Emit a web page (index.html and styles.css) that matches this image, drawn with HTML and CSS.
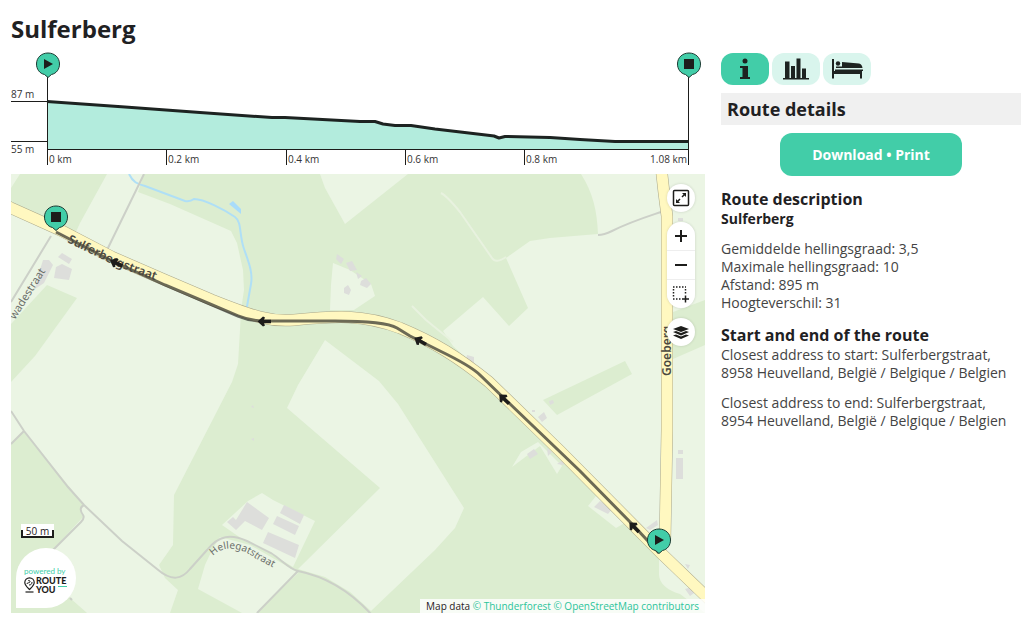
FILE: index.html
```html
<!DOCTYPE html>
<html lang="en">
<head>
<meta charset="utf-8">
<meta name="viewport" content="width=device-width, initial-scale=1">
<title>Sulferberg</title>
<link rel="stylesheet" href="styles.css">
</head>
<body>
<svg class="symbols" aria-hidden="true">
  <defs>
    <path id="pin" d="M0 13.500 L-3.500 10.500 C-8.500 9.500-11.500 5-11.500 0 C-11.500-6.500-6.500-11-0-11 C6.500-11 11.500-6.500 11.500 0 C11.500 5 8.500 9.500 3.500 10.500 Z"/>
    <path id="arrow" d="M-6.500 0 L-1-5 L1-4 L0-1.800 L7-1.800 L7 1.800 L0 1.800 L1 4 L-1 5 Z"/>
  </defs>
</svg>
<main class="page">
  <section class="route">
    <h1 class="title">Sulferberg</h1>
    <svg class="chart" viewBox="11 50 694 118" role="img" aria-label="Elevation profile">
      <path class="chart-fill" d="M48 101 125 107 200 113 272 117.500H285L360 121.500H375L383 124 395 125.500H411L435 129 490 135 498 137.500 505 136.500 550 137.500 615 141.500H688V149H48Z"/>
      <path class="chart-axis" d="M11 101.500H47M11 141.500H47M47.500 76V165M688.500 76V165M47 149.500H689M166.500 149V165M286.500 149V165M405.500 149V165M524.500 149V165"/>
      <path class="chart-line" d="M47 101.500 125 107 200 112.500 272 117.500H285L360 121.500H375L383 124 395 125.500H411L435 129 490 135.500 494 136 499 138 505 136.500 550 137.500 580 139.500 615 141.500H689"/>
      <g class="chart-text">
        <text x="11" y="98">87 m</text><text x="11" y="153">55 m</text>
        <text x="49" y="163">0 km</text><text x="168" y="163">0.2 km</text><text x="288" y="163">0.4 km</text>
        <text x="407" y="163">0.6 km</text><text x="526" y="163">0.8 km</text><text x="687" y="163" text-anchor="end">1.08 km</text>
      </g>
      <g transform="translate(48 64)"><use href="#pin" class="pin"/><path class="ink" d="M-4-5 5 0-4 5Z"/></g>
      <g transform="translate(689 64)"><use href="#pin" class="pin"/><path class="ink" d="M-5-5H5V5H-5Z"/></g>
    </svg>
    <div class="map">
      <svg class="map-canvas" viewBox="11 174 694 439" role="img" aria-label="Route map">
        <path class="land" d="M11 174H705V613H11Z"/>
        <g class="field">
          <path d="M11 174H20L11 188Z"/>
          <path d="M107 174H144L138 192 170 204 231 231 237 243 243 270 244 290 241 310 240 330 238 364 232 382 212 421 174 495 173 545 159 565 165 578 178 590 170 613H11V214L75 234 80 223Z"/>
          <path d="M325 340 379 381 398 404 464 508 455 528 435 550 371 611 350 592 325 577 298 569 380 488 287 408 298 385Z"/>
          <path d="M320 174 325 188 345 224 408 174Z"/>
          <path d="M333 263 350 270 371 284 375 296 354 310H330L331 285Z"/>
          <path d="M581 174C593 193 597 210 598 234L550 238 530 241 506 258 528 308 509 326 483 297 443 331 453 346 550 436 662 550 705 600V174Z"/>
          <path d="M222 525 248 501 262 493 273 500 315 521 293 567 270 553 245 541Z"/>
          <path d="M212 550 205 565 198 589 242 613H256L298 573 285 565 250 545 220 537Z"/>
          <path d="M512 467 540 446 557 474 562 466 538 442 521 452Z"/>
          <path d="M588 506 596 496 630 520 616 528Z"/>
          <path d="M659 555V575Q660 588 680 594L705 613V592Z"/>
        </g>
        <g class="land">
          <path d="M47 285 77 298 35 356 11 382V324Z"/>
          <path d="M11 444 24 431 84 505 80 511 83 517 50 553 70 598 87 613H11Z"/>
          <path d="M543 400 625 361 632 374 557 415Z"/>
          <path d="M673 312 705 300V345L673 359Z"/>
        </g>
        <path class="track-light" d="M441 193Q447 196 460 212L492 258Q496 264 506 257M412 306 426 320 453 342"/>
        <path class="stream" d="M129 174C133 182 137 184 145 186L185 201Q190 202 194 199C204 199 225 210 235 217C242 222 239 235 244 249C249 263 253 273 251 284L246 312"/>
        <path class="pond" d="M229 204 233 201 241 209 241 214Z"/>
        <g class="building">
          <path d="M58 257 62 253 72 259 69 264ZM56 267 62 264 72 269 69 280 54 278ZM43 260 49 260 53 265 44 283 35 289 39 273Z"/>
          <path d="M227 522 233 517 236 520 247 502 269 518 262 530 245 521 236 530Z"/>
          <path d="M284 505 304 515 300 524 280 513ZM277 516 299 526 295 535 273 524ZM268 532 299 545 295 558 263 543Z"/>
          <path d="M337 254 344 259 341 264 336 259ZM346 263 352 261 357 270 350 271ZM356 272 362 276 358 279ZM361 281 366 278 371 284 367 288 360 285ZM344 288 348 285 351 290 349 295 344 293Z"/>
          <path d="M676 458H683V479H676ZM678 450H683V454H678ZM678 218H683V221H678ZM467 355 474 357 474 363 466 361ZM538 417 544 412 547 418 542 422ZM527 454 534 449 538 454 530 459ZM547 448 552 452 548 456ZM594 507 600 501 612 509 608 514ZM646 528 657 520 658 525 650 530ZM685 564 690 565 688 569Z"/>
          <path d="M549 401 553 400 554 403 550 405ZM532 410H535V412H532ZM251 407 253 405 254 408ZM251 439 254 438 254 441ZM557 464 563 460 564 465ZM685 589 692 587 697 591 690 596Z"/>
        </g>
        <path class="lane" d="M144 174 107 250M51 236 11 302M598 235Q604 235 612 231C630 222 640 219 661 212M11 411 24 431 68 487 84 505 122 541 157 569C172 582 182 579 190 569L207 550C219 535 231 534 247 541L271 553C283 561 289 569 298 571C323 576 348 589 371 614M24 431 11 444M84 505Q78 508 83 515 85 518 81 522L50 553M298 571 257 613M70 598 72 600"/>
        <path class="road-edge" d="M661 166 664 193 667 216V430L665 542"/>
        <path class="road-edge" d="M5 205 11 208 60 230 112 257 165 280 212 300C255 317 270 322 294 320C335 316 363 314 400 328C434 342 458 357 489 382L560 451 661 553 712 602"/>
        <path class="road" d="M661 166 664 193 667 216V430L665 542"/>
        <path class="road" d="M5 205 11 208 60 230 112 257 165 280 212 300C255 317 270 322 294 320C335 316 363 314 400 328C434 342 458 357 489 382L560 451 661 553 712 602"/>
        <path class="route-line" d="M56 232 110 260 165 285 210 304 238 316Q250 321 264 321H335Q385 321 397 328L410 336 440 351Q471 366 480 375L509 403 580 471 634 526 659 553"/>
        <path id="road-name" class="guide" d="M67 242 116 266 185 291"/>
        <path id="lane-name" class="guide" d="M213 556C224 544 242 548 255 558L285 574"/>
        <g class="label">
          <text class="label-road"><textPath href="#road-name">Sulferbergstraat</textPath></text>
          <text class="label-lane"><textPath href="#lane-name">Hellegatstraat</textPath></text>
          <text transform="translate(15 320) rotate(-58)">wadestraat</text>
          <text class="label-road" transform="translate(671 376) rotate(-90)">Goeberg</text>
        </g>
        <g class="ink">
          <use href="#arrow" transform="translate(116 263) rotate(24)"/>
          <use href="#arrow" transform="translate(264 321.500)"/>
          <use href="#arrow" transform="translate(420 341) rotate(30)"/>
          <use href="#arrow" transform="translate(504 399) rotate(43)"/>
          <use href="#arrow" transform="translate(634 527) rotate(45)"/>
        </g>
        <g transform="translate(56 217)"><use href="#pin" class="pin"/><path class="ink" d="M-5-5H5V5H-5Z"/></g>
        <g transform="translate(659 540)"><use href="#pin" class="pin"/><path class="ink" d="M-4-5 5 0-4 5Z"/></g>
      </svg>
      <div class="controls">
        <button class="control" type="button" aria-label="Full screen">
          <svg width="18" height="18" viewBox="0 0 18 18"><rect x="1.500" y="1.500" width="15" height="15" rx="1" fill="none" stroke="#1d1d1b" stroke-width="1.500"/><path d="M5 13 8 10M10 8 13 5" stroke="#1d1d1b" stroke-width="1.500"/><path fill="#1d1d1b" d="M10 4H14V8ZM4 10V14H8Z"/></svg>
        </button>
        <div class="zoom">
          <button class="control" type="button" aria-label="Zoom in"><svg width="18" height="18" viewBox="0 0 18 18"><path d="M3 9H15M9 3V15" stroke="#1d1d1b" stroke-width="2"/></svg></button>
          <button class="control" type="button" aria-label="Zoom out"><svg width="18" height="18" viewBox="0 0 18 18"><path d="M3 9H15" stroke="#1d1d1b" stroke-width="2"/></svg></button>
          <button class="control" type="button" aria-label="Zoom to area"><svg width="18" height="18" viewBox="0 0 18 18"><path d="M1 2H14M1 14H10M1.500 4V13M13.500 4V10" fill="none" stroke="#1d1d1b" stroke-width="1.500" stroke-dasharray="1.500 1.500"/><path d="M10 14H17M13.500 10.500V17.500" stroke="#1d1d1b" stroke-width="1.500"/></svg></button>
        </div>
        <button class="control" type="button" aria-label="Layers">
          <svg width="18" height="18" viewBox="0 0 18 18"><path fill="#1d1d1b" d="M9 3 17 6 9 9 1 6ZM1 9 4 8 9 10 14 8 17 9 9 12.500ZM1 12.500 4 11.500 9 13.500 14 11.500 17 12.500 9 16Z"/></svg>
        </button>
      </div>
      <div class="scale">50 m</div>
      <a class="brand" href="#" aria-label="powered by RouteYou">
        <span class="brand-by">powered by</span>
        <span class="brand-row">
          <svg width="11" height="16" viewBox="0 0 11 16" fill="none" stroke="#1d1d1b"><path d="M5.500 12.500C4 11 .8 8.500.8 5.500A4.700 4.700 0 0 1 10.200 5.500C10.200 8.500 7 11 5.500 12.500Z" stroke-width="1.200"/><path d="M3 7C3 5 5.500 6.500 6 5S4.500 3 4 4M5 8C7 8 8 7 8 5" stroke-width="1"/><path d="M1.500 15H9.500" stroke-width="1.200"/></svg>
          <span class="brand-name"><span class="brand-line">ROUTE</span><span class="brand-line brand-you">YOU</span></span>
        </span>
      </a>
      <div class="credits">Map data <a href="#">© Thunderforest</a> <a href="#">© OpenStreetMap contributors</a></div>
    </div>
  </section>
  <aside class="details">
    <nav class="tabs" aria-label="Route information">
      <button class="tab tab-active" type="button" aria-label="Details"><svg width="32" height="24" viewBox="0 0 32 24"><circle cx="16" cy="4" r="2.500"/><path d="M11 9H19V20H21V22H11V20H13.500V11H11Z"/></svg></button>
      <button class="tab" type="button" aria-label="Statistics"><svg width="32" height="24" viewBox="0 0 32 24"><path d="M5 4.500H9.500V22H5ZM11 9H15V22H11ZM16.500 1.500H20.500V22H16.500ZM22 11.500H26V22H22ZM3 21H29V22.500H3Z"/></svg></button>
      <button class="tab" type="button" aria-label="Places to stay"><svg width="32" height="24" viewBox="0 0 32 24"><path d="M1 2H3V14H31V21.500H29V17H3V21.500H1ZM4 12.500H32V14H4Z"/><circle cx="7" cy="6.500" r="2.200"/><path d="M11 5 28 6.500Q31 7 31.500 11H5V9.500H11Z"/></svg></button>
    </nav>
    <h2 class="bar-title">Route details</h2>
    <button class="download" type="button">Download • Print</button>
    <h3 class="heading">Route description</h3>
    <h4 class="subheading">Sulferberg</h4>
    <p class="facts">Gemiddelde hellingsgraad: 3,5<br>Maximale hellingsgraad: 10<br>Afstand: 895 m<br>Hoogteverschil: 31</p>
    <h3 class="heading">Start and end of the route</h3>
    <p class="text">Closest address to start: Sulferbergstraat, 8958 Heuvelland, België / Belgique / Belgien</p>
    <p class="text">Closest address to end: Sulferbergstraat, 8954 Heuvelland, België / Belgique / Belgien</p>
  </aside>
</main>
</body>
</html>
```
FILE: styles.css
```css
* { box-sizing: border-box; }
body { margin: 0; background: #fff; color: #1f2123; font-family: "Open Sans", "Noto Sans", sans-serif; font-size: 14px; line-height: 18px; }
h1, h2, h3, h4, p { margin: 0; }
button { border: 0; padding: 0; font: inherit; cursor: pointer; }
svg { display: block; }
.symbols { position: absolute; width: 0; height: 0; }
.page { display: grid; grid-template-columns: minmax(0, 1fr) 300px; gap: 16px; padding: 13px 3px 12px 11px; }
.title { font-size: 24px; font-weight: 700; line-height: 32px; margin-bottom: 5px; }
.chart { width: 100%; height: auto; overflow: visible; margin-bottom: 6px; }
.chart-fill { fill: #b3ecdd; }
.chart-axis { fill: none; stroke: #1d1d1b; stroke-width: 1; }
.chart-line { fill: none; stroke: #1d2321; stroke-width: 3; stroke-linejoin: round; }
.chart-text { font-size: 10px; fill: #333; }
.pin { fill: #42cda8; stroke: #1d3b33; stroke-width: 1; }
.ink { fill: #1d1d1b; }

.map { position: relative; }
.map-canvas { width: 100%; height: auto; }
.land { fill: #dcedd0; }
.field { fill: #ebf5e4; }
.building { fill: #dddedb; }
.lane { fill: none; stroke: #ccd0c8; stroke-width: 2; }
.track-light { fill: none; stroke: #e8f2df; stroke-width: 2; }
.stream { fill: none; stroke: #afdff6; stroke-width: 2; }
.pond { fill: #a9dcfa; }
.road-edge { fill: none; stroke: #aaa78a; stroke-width: 12; }
.road { fill: none; stroke: #fff8c0; stroke-width: 11; }
.route-line { fill: none; stroke: #1d1d1b; stroke-opacity: .65; stroke-width: 3; }
.guide { fill: none; }
.label { font-family: "Noto Sans", sans-serif; font-size: 11px; fill: #6b6f6b; }
.label-lane { font-size: 10px; }
.label-road { font-size: 12px; font-weight: 600; fill: #4b4940; }

.controls { position: absolute; top: 10px; right: 10px; display: flex; flex-direction: column; gap: 10px; }
.control { display: flex; align-items: center; justify-content: center; width: 28px; height: 28px; border-radius: 14px; background: #fff; box-shadow: 0 0 3px rgba(0, 0, 0, .15); }
.zoom { display: flex; flex-direction: column; gap: 1px; border-radius: 14px; overflow: hidden; background: #eee; box-shadow: 0 0 3px rgba(0, 0, 0, .15); }
.zoom .control { border-radius: 0; box-shadow: none; }
.scale { position: absolute; left: 10px; bottom: 75px; width: 33px; height: 14px; background: linear-gradient(#1d1d1b, #1d1d1b) left bottom / 2px 8px no-repeat, linear-gradient(#1d1d1b, #1d1d1b) right bottom / 2px 8px no-repeat, linear-gradient(#1d1d1b, #1d1d1b) left bottom / 100% 2px no-repeat, #fff; font-size: 10px; line-height: 14px; text-align: center; }
.brand { position: absolute; left: 5px; bottom: 5px; width: 60px; height: 60px; padding: 18px 0 0 8px; border-radius: 30px 30px 30px 0; background: #fff; color: #1d1d1b; text-decoration: none; font-family: Lato, sans-serif; }
.brand-by { display: block; font-size: 8px; line-height: 10px; color: #42cda8; }
.brand-row { display: flex; align-items: center; gap: 1px; }
.brand-name { display: flex; flex-direction: column; font-size: 9px; font-weight: 900; line-height: 9px; }
.brand-line { display: flex; gap: 2px; }
.brand-you::after { content: ""; width: 9px; height: 1px; margin-top: 1px; background: #42cda8; }
.credits { position: absolute; right: 0; bottom: 0; padding: 0 6px; background: rgba(255, 255, 255, .8); font-size: 10px; line-height: 14px; }
.credits a { color: #2cc49b; text-decoration: none; }

.details { padding-top: 40px; }
.tabs { display: flex; gap: 3px; margin-bottom: 8px; }
.tab { display: flex; align-items: center; justify-content: center; width: 48px; height: 32px; border-radius: 12px; background: #d9f5ed; fill: #1d2321; }
.tab-active { background: #42cda8; }
.bar-title { padding: 0 6px; background: #f0f0f0; font-size: 18px; font-weight: 700; line-height: 32px; }
.download { display: block; margin: 8px auto 13px; padding: 13px 32px 12px; border-radius: 12px; background: #42cda8; color: #fff; font-weight: 700; }
.heading { font-size: 16px; font-weight: 700; line-height: 20px; }
.subheading { margin-top: 1px; font-size: 14px; font-weight: 700; line-height: 18px; }
.facts { margin: 12px 0 13px; color: #444; }
.text { margin: 1px 0 12px; color: #444; }
```
